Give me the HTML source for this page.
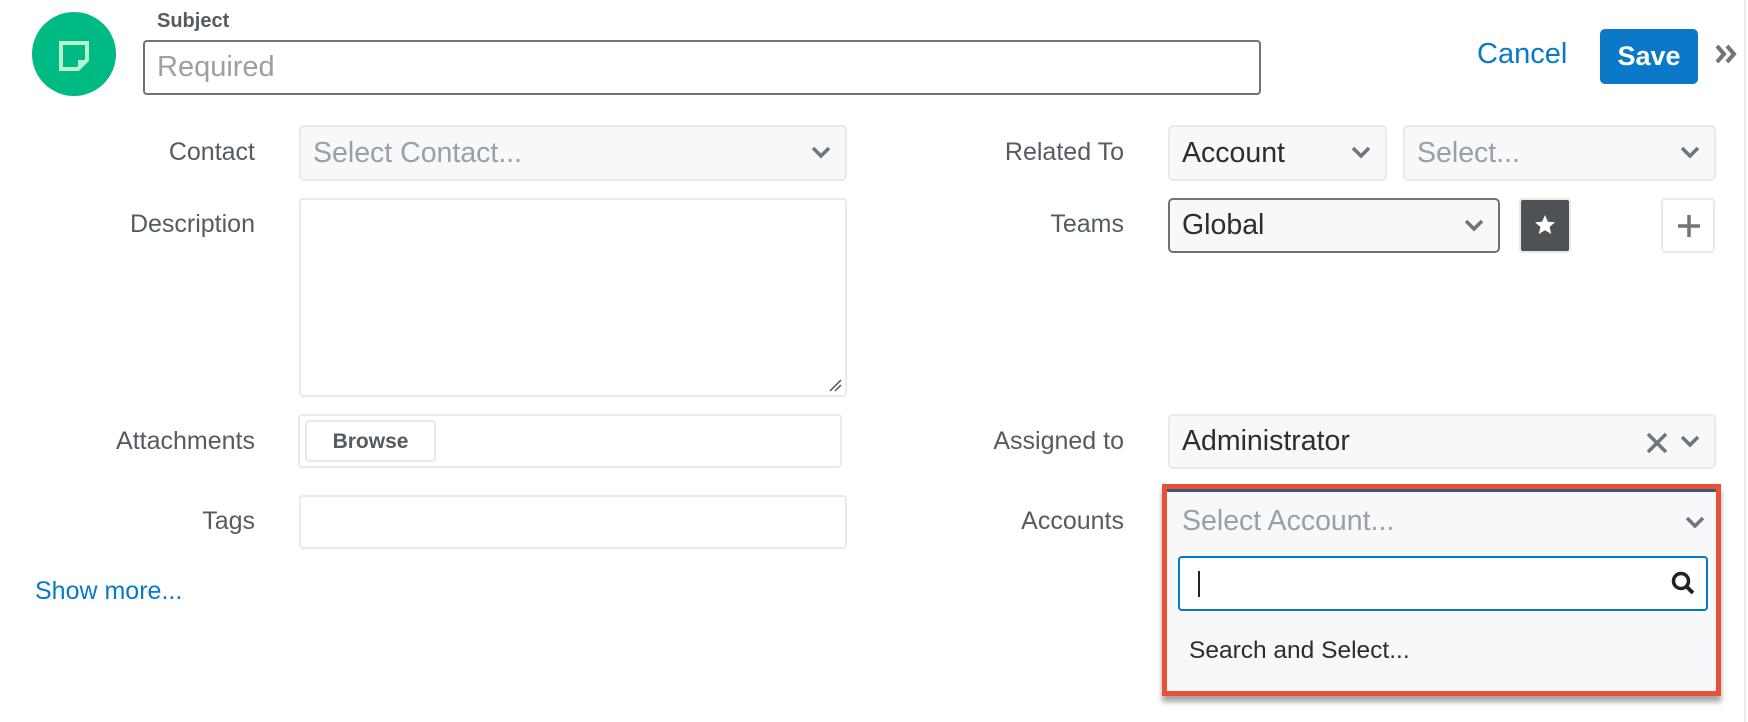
<!DOCTYPE html>
<html><head><meta charset="utf-8"><style>
*{box-sizing:border-box;margin:0;padding:0}
body{width:1748px;height:722px;background:#fff;position:relative;overflow:hidden;font-family:"Liberation Sans",Arial,sans-serif;color:#2b2d2f}
.a{position:absolute}
.lbl{position:absolute;font-size:25px;color:#545b61;text-align:right;width:240px}
.sel{position:absolute;background:#f6f8fa;border:2px solid #e6eaed;border-radius:5px;font-size:28.5px;padding-left:12px;display:flex;align-items:center}
.ph{color:#9aa0a5}
.chev{position:absolute;right:14px;top:50%;margin-top:-8px}
</style></head><body>
<div class="a" style="left:32px;top:12px;width:84px;height:84px;border-radius:50%;background:#00ba83"></div>
<svg class="a" style="left:58px;top:40px" width="32" height="32" viewBox="0 0 32 32"><path d="M3 3H29V20L20 29H3Z" fill="none" stroke="#b9f5cc" stroke-width="4"/><path d="M20 29V20H29" fill="#b9f5cc"/></svg>
<div class="a" style="left:157px;top:10px;font-size:20px;font-weight:bold;color:#545b61">Subject</div>
<div class="a" style="left:143px;top:40px;width:1118px;height:55px;border:2px solid #6d7378;border-radius:4px;font-size:29px;color:#9aa0a5;padding:9px 12px">Required</div>
<div class="a" style="left:1477px;top:38px;font-size:29px;color:#0679c8">Cancel</div>
<div class="a" style="left:1600px;top:29px;width:98px;height:55px;background:#0b78c8;border-radius:5px;color:#fff;font-weight:bold;font-size:27px;text-align:center;line-height:55px">Save</div>
<svg class="a" style="left:1714px;top:44px" width="24" height="20"><path d="M3 2L10 10L3 18M13 2L20 10L13 18" fill="none" stroke="#6f757a" stroke-width="4"/></svg>
<div class="a" style="left:1744px;top:0;width:2px;height:722px;background:#e8eaec"></div>

<div class="lbl" style="left:15px;top:138px">Contact</div>
<div class="sel ph" style="left:299px;top:125px;width:548px;height:56px">Select Contact...<svg class="chev" width="20" height="14"><path d="M2 3L10 11L18 3" fill="none" stroke="#6f757a" stroke-width="3.5"/></svg></div>
<div class="lbl" style="left:884px;top:138px">Related To</div>
<div class="sel" style="left:1168px;top:125px;width:219px;height:56px">Account<svg class="chev" width="20" height="14"><path d="M2 3L10 11L18 3" fill="none" stroke="#6f757a" stroke-width="3.5"/></svg></div>
<div class="sel ph" style="left:1403px;top:125px;width:313px;height:56px">Select...<svg class="chev" width="20" height="14"><path d="M2 3L10 11L18 3" fill="none" stroke="#6f757a" stroke-width="3.5"/></svg></div>

<div class="lbl" style="left:15px;top:210px">Description</div>
<div class="a" style="left:299px;top:198px;width:548px;height:199px;border:2px solid #e6eaed;border-radius:4px"></div>
<svg class="a" style="left:828px;top:378px" width="14" height="14"><path d="M2 13L13 2M7 13L13 7" stroke="#555" stroke-width="1.5"/></svg>
<div class="lbl" style="left:884px;top:210px">Teams</div>
<div class="sel" style="left:1168px;top:198px;width:332px;height:55px;border-color:#6d7378">Global<svg class="chev" width="20" height="14"><path d="M2 3L10 11L18 3" fill="none" stroke="#6f757a" stroke-width="3.5"/></svg></div>
<div class="a" style="left:1519px;top:198px;width:52px;height:55px;background:#4e5255;border:2px solid #e6eaed;border-radius:4px"></div>
<svg class="a" style="left:1533px;top:213px" width="24" height="24" viewBox="0 0 24 24"><path d="M12 2L14.9 8.8 22 9.3 16.6 14 18.2 21 12 17.3 5.8 21 7.4 14 2 9.3 9.1 8.8Z" fill="#fff"/></svg>
<div class="a" style="left:1661px;top:198px;width:54px;height:55px;border:2px solid #e6eaed;border-radius:4px"></div>
<svg class="a" style="left:1677px;top:214px" width="24" height="24"><path d="M12 1V23M1 12H23" stroke="#6f757a" stroke-width="3.5"/></svg>

<div class="lbl" style="left:15px;top:427px">Attachments</div>
<div class="a" style="left:298px;top:414px;width:544px;height:54px;border:2px solid #e6eaed;border-radius:4px"></div>
<div class="a" style="left:305px;top:420px;width:131px;height:42px;border:2px solid #e6eaed;border-radius:4px;background:#fff;font-weight:bold;font-size:21px;color:#545b61;text-align:center;line-height:40px">Browse</div>
<div class="lbl" style="left:884px;top:427px">Assigned to</div>
<div class="sel" style="left:1168px;top:414px;width:548px;height:55px;color:#2b2d2f">Administrator
<svg class="a" style="right:46px;top:16px" width="22" height="22"><path d="M2 2L20 20M20 2L2 20" stroke="#6f757a" stroke-width="3.5"/></svg>
<svg class="chev" width="20" height="14"><path d="M2 3L10 11L18 3" fill="none" stroke="#6f757a" stroke-width="3.5"/></svg></div>

<div class="lbl" style="left:15px;top:507px">Tags</div>
<div class="a" style="left:299px;top:495px;width:548px;height:54px;border:2px solid #e6eaed;border-radius:4px"></div>
<div class="lbl" style="left:884px;top:507px">Accounts</div>
<div class="a" style="left:35px;top:577px;font-size:25px;color:#0679c8">Show more...</div>

<div class="a" style="left:1162px;top:484px;width:559px;height:212px;border:5px solid #e8503a;background:#f6f8fa;box-shadow:0 6px 5px rgba(0,0,0,.35)">
 <div class="a" style="left:0;top:0;width:549px;height:3px;background:#3d5a73"></div>
 <div class="a ph" style="left:15px;top:16px;font-size:28.5px">Select Account...</div>
 <svg class="a" style="left:518px;top:26px" width="20" height="14"><path d="M2 3L10 11L18 3" fill="none" stroke="#6f757a" stroke-width="3.5"/></svg>
 <div class="a" style="left:11px;top:67px;width:530px;height:55px;background:#fff;border:2px solid #0679c8;border-radius:4px"></div>
 <div class="a" style="left:31px;top:82px;width:2px;height:26px;background:#222"></div>
 <svg class="a" style="left:503px;top:81px" width="26" height="26"><circle cx="11" cy="11" r="7.5" fill="none" stroke="#222" stroke-width="3.5"/><path d="M16 16L23 23" stroke="#222" stroke-width="4"/></svg>
 <div class="a" style="left:22px;top:148px;font-size:24.5px;color:#2b2d2f">Search and Select...</div>
</div>
</body></html>
